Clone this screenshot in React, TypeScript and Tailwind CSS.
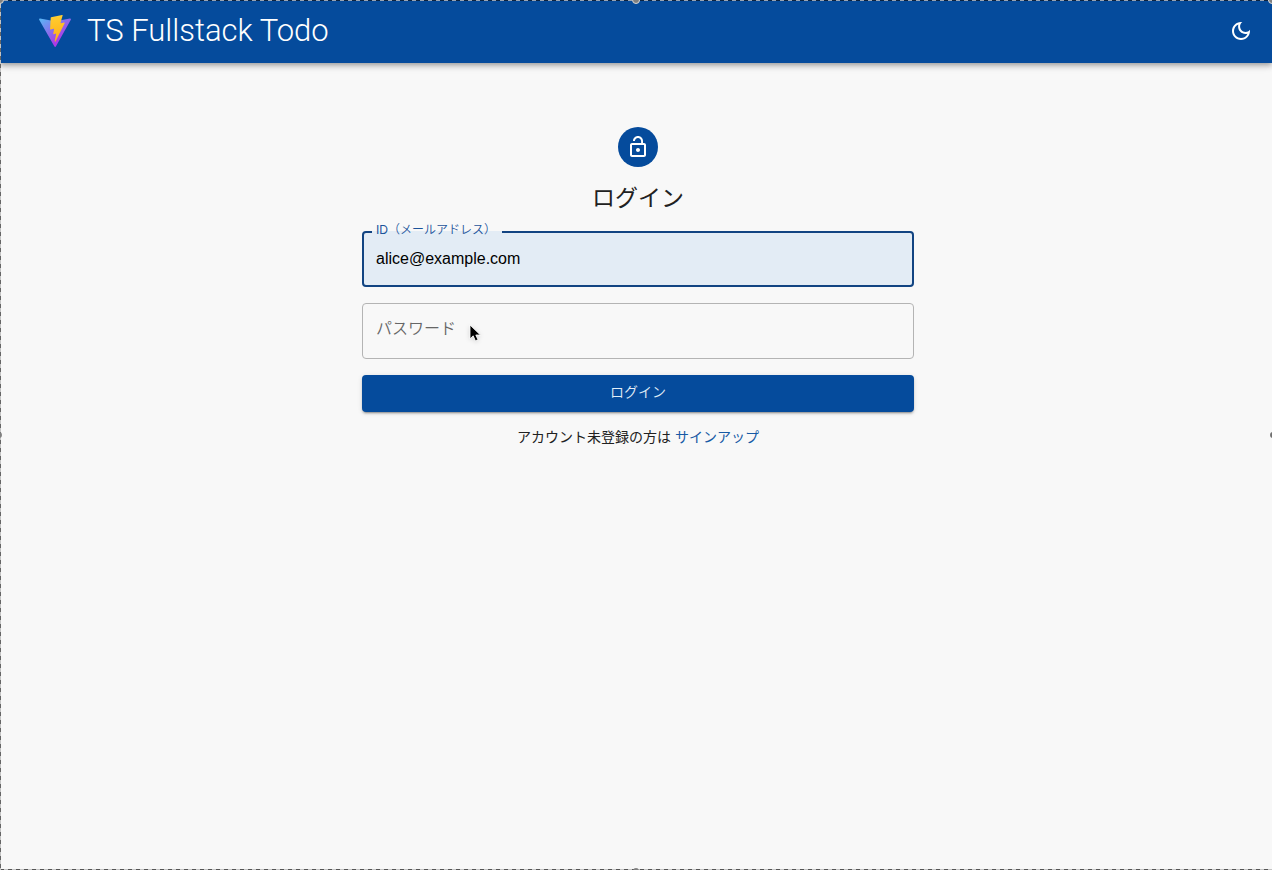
import { useState } from "react";

function ViteLogo() {
  return (
    <svg viewBox="0 0 256 257" className="size-8" aria-hidden="true">
      <defs>
        <linearGradient id="logo-body" x1="-.828%" x2="57.636%" y1="7.652%" y2="78.411%">
          <stop offset="0%" stopColor="#5BB4F5" />
          <stop offset="100%" stopColor="#AB3CE6" />
        </linearGradient>
        <linearGradient id="logo-bolt" x1="43.376%" x2="50.316%" y1="2.242%" y2="89.03%">
          <stop offset="0%" stopColor="#FFD43A" />
          <stop offset="8.333%" stopColor="#FFCB2E" />
          <stop offset="100%" stopColor="#FFB01A" />
        </linearGradient>
      </defs>
      <path
        fill="url(#logo-body)"
        d="M255.153 37.938L134.897 252.976c-2.483 4.44-8.862 4.466-11.382.048L.875 37.958c-2.746-4.814 1.371-10.646 6.827-9.67l120.385 21.517a6.537 6.537 0 0 0 2.322-.004l117.867-21.483c5.438-.991 9.574 4.796 6.877 9.62Z"
      />
      <path
        fill="url(#logo-bolt)"
        d="M185.432.063L96.44 17.501a3.268 3.268 0 0 0-2.634 3.014l-5.474 92.456a3.268 3.268 0 0 0 3.997 3.378l24.777-5.718c2.318-.535 4.413 1.507 3.936 3.838l-7.361 36.047c-.495 2.426 1.782 4.5 4.151 3.78l15.304-4.649c2.372-.72 4.652 1.36 4.15 3.788l-11.698 56.621c-.732 3.542 3.979 5.473 5.943 2.437l1.313-2.028l72.516-144.72c1.215-2.423-.88-5.186-3.54-4.672l-25.505 4.922c-2.396.462-4.435-1.77-3.759-4.114l16.646-57.705c.677-2.35-1.37-4.583-3.769-4.113Z"
      />
    </svg>
  );
}

function MoonIcon() {
  return (
    <svg viewBox="0 0 24 24" fill="currentColor" className="size-6" aria-hidden="true">
      <path d="M9.37 5.51c-.18.64-.27 1.31-.27 1.99 0 4.08 3.32 7.4 7.4 7.4.68 0 1.35-.09 1.99-.27C17.45 17.19 14.93 19 12 19c-3.86 0-7-3.14-7-7 0-2.93 1.81-5.45 4.37-6.49zM12 3c-4.97 0-9 4.03-9 9s4.03 9 9 9 9-4.03 9-9c0-.46-.04-.92-.1-1.36-.98 1.37-2.58 2.26-4.4 2.26-2.98 0-5.4-2.42-5.4-5.4 0-1.81.89-3.42 2.26-4.4-.44-.06-.9-.1-1.36-.1z" />
    </svg>
  );
}

function LockOpenIcon() {
  return (
    <svg viewBox="0 0 24 24" fill="currentColor" className="size-6" aria-hidden="true">
      <path d="M12 17c1.1 0 2-.9 2-2s-.9-2-2-2-2 .9-2 2 .9 2 2 2zm6-9h-1V6c0-2.76-2.24-5-5-5S7 3.24 7 6h1.9c0-1.71 1.39-3.1 3.1-3.1s3.1 1.39 3.1 3.1v2H6c-1.1 0-2 .9-2 2v10c0 1.1.9 2 2 2h12c1.1 0 2-.9 2-2V10c0-1.1-.9-2-2-2zm0 12H6V10h12v10z" />
    </svg>
  );
}

function Pointer() {
  return (
    <svg
      viewBox="0 0 12 18"
      className="pointer-events-none absolute top-[21px] left-[107px] h-[18px] w-3 drop-shadow-sm"
      aria-hidden="true"
    >
      <path
        d="M1 1v13.8l3.2-3 2.2 5 2.6-1-2.2-4.8h4.6z"
        fill="#000"
        stroke="#fff"
        strokeWidth="0.8"
      />
    </svg>
  );
}

/* Dashed recording frame with its drag handles, laid over the page. */
function SelectionFrame() {
  const handle = "absolute size-2 rounded-full border border-[#d8d8d8] bg-[#808080]";
  const row = "absolute inset-x-0 h-px bg-[repeating-linear-gradient(90deg,#555_0_4px,#c4c4c4_4px_8px)]";
  const column = "absolute inset-y-0 w-px bg-[repeating-linear-gradient(180deg,#666_0_4px,#c4c4c4_4px_8px)]";
  return (
    <div className="pointer-events-none absolute inset-0 overflow-hidden" aria-hidden="true">
      <div className="absolute inset-x-0 top-0 h-px bg-[repeating-linear-gradient(90deg,#0c2340_0_4px,#9aa5b5_4px_8px)]" />
      <div className={`${row} bottom-0`} />
      <div className={`${column} left-0`} />
      <span className={`${handle} -top-1 -left-1`} />
      <span className={`${handle} -top-1 left-1/2 -translate-x-1/2`} />
      <span className={`${handle} -top-1 -right-1`} />
      <span className="absolute top-1/2 -left-1 size-1.5 -translate-y-1/2 rounded-full bg-[#808080]" />
      <span className="absolute top-1/2 -right-1 size-1.5 -translate-y-1/2 rounded-full bg-[#707070]" />
      <span className="absolute -bottom-1 left-1/2 size-1.5 -translate-x-1/2 rounded-full bg-[#808080]" />
    </div>
  );
}

export default function App() {
  const [email, setEmail] = useState("alice@example.com");
  const [password, setPassword] = useState("");

  return (
    <div className="relative flex min-h-screen flex-col bg-[#f8f8f8] font-['Liberation_Sans','Noto_Sans_CJK_JP',sans-serif] font-[350] text-[#212121]">
      <header className="flex h-[63px] items-center justify-between bg-[#054b9c] pr-[19px] pb-0.5 pl-[39px] text-white shadow-[0_2px_4px_-1px_rgba(0,0,0,0.2),0_4px_5px_rgba(0,0,0,0.14),0_1px_10px_rgba(0,0,0,0.12)]">
        <div className="flex items-center gap-4">
          <ViteLogo />
          <h1 className="font-['Roboto',sans-serif] text-[31px] leading-[42px] font-light">TS Fullstack Todo</h1>
        </div>
        <button type="button" aria-label="ダークモード" className="cursor-pointer">
          <MoonIcon />
        </button>
      </header>

      <main className="mx-auto flex w-full max-w-[600px] flex-col items-center pt-16 pr-[22px] pl-[26px]">
        <div className="flex size-10 items-center justify-center rounded-full bg-[#054b9c] text-white">
          <LockOpenIcon />
        </div>
        <h2 className="mt-[15px] text-[23px] leading-8 font-normal">ログイン</h2>

        <form className="mt-[17px] flex w-full flex-col gap-4" onSubmit={(event) => event.preventDefault()}>
          <div className="relative h-14">
            <input
              id="email"
              type="email"
              value={email}
              onChange={(event) => setEmail(event.target.value)}
              className="size-full rounded bg-[#e3ecf5] px-3.5 text-base text-black outline-none"
            />
            <fieldset
              aria-hidden="true"
              className="pointer-events-none absolute inset-x-0 -top-[5px] bottom-0 rounded border-2 border-[#124482] px-2"
            >
              <legend className="h-[11px] w-[130px]" />
            </fieldset>
            <label htmlFor="email" className="absolute -top-[9px] left-3.5 text-xs leading-4 whitespace-nowrap text-[#1c549b]">
              ID（メールアドレス）
            </label>
          </div>

          <div className="relative h-14">
            <input
              id="password"
              type="password"
              value={password}
              onChange={(event) => setPassword(event.target.value)}
              className="size-full rounded border border-[#b4b4b4] bg-transparent px-3.5 text-base outline-none"
            />
            <label htmlFor="password" className="absolute top-3.5 left-3.5 text-base leading-6 text-[#666]">
              パスワード
            </label>
            <Pointer />
          </div>

          <button
            type="submit"
            className="h-[37px] cursor-pointer rounded bg-[#054b9c] pb-1 text-sm text-[#e2eef8] shadow-[0_3px_1px_-2px_rgba(0,0,0,0.2),0_2px_2px_rgba(0,0,0,0.14),0_1px_5px_rgba(0,0,0,0.12)]"
          >
            ログイン
          </button>
        </form>

        <p className="mt-[15px] text-sm leading-5 font-normal">
          アカウント未登録の方は{" "}
          <a href="#signup" className="text-[#175aa5]">
            サインアップ
          </a>
        </p>
      </main>

      <SelectionFrame />
    </div>
  );
}
